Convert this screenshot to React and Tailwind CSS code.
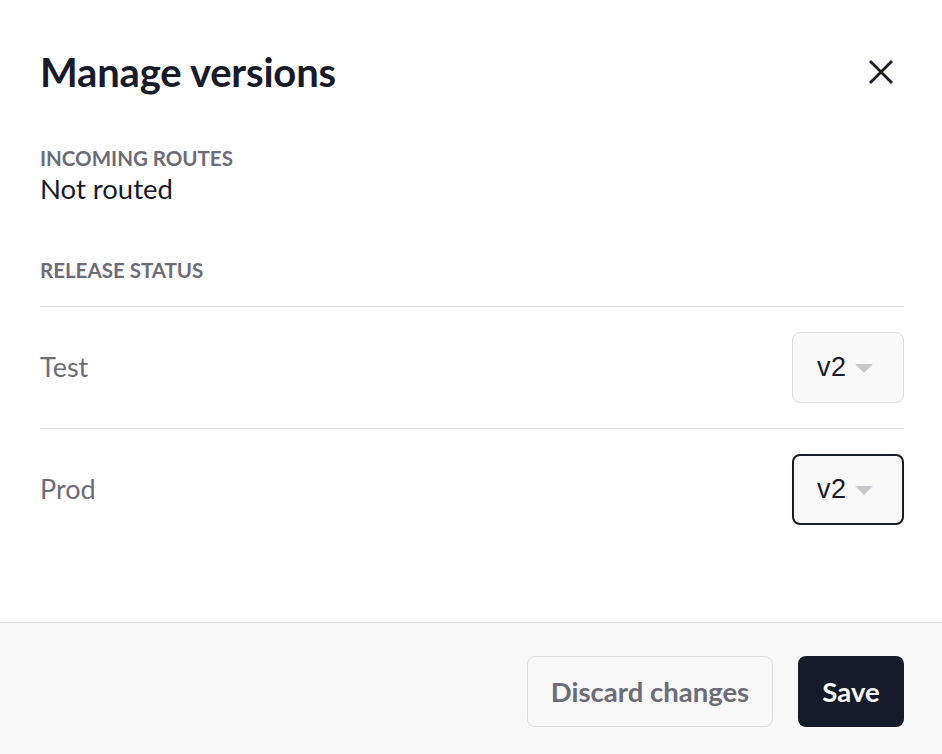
import React from "react";

function Caret() {
  return (
    <svg width="18" height="9" viewBox="0 0 18 9" className="ml-[8px] mt-[2px]">
      <path d="M0 0 L18 0 L9 9 Z" fill="#c6c6cd" />
    </svg>
  );
}

function VersionSelect({ focused }) {
  return (
    <div
      className={
        focused
          ? "flex items-center w-[112px] h-[71px] pl-[23px] rounded-[8px] border-2 border-[#171b2a] bg-[#f8f8f9]"
          : "flex items-center w-[112px] h-[71px] pl-[24px] rounded-[8px] border border-[#dcdce1] bg-[#f8f8f9]"
      }
    >
      <span
        className="text-[27px] tracking-[0.5px] text-[#171b2a]"
        style={{ fontFamily: "'Liberation Sans', Arial, sans-serif" }}
      >
        v2
      </span>
      <Caret />
    </div>
  );
}

function Row({ label, focused }) {
  return (
    <div className="flex items-center justify-between border-t border-[#e0e0e4] h-[122px]">
      <span className="text-[27px] text-[#6c6c78]">{label}</span>
      <VersionSelect focused={focused} />
    </div>
  );
}

export default function App() {
  return (
    <div
      className="w-[942px] h-[754px] bg-white flex flex-col"
      style={{ fontFamily: "Lato, 'Noto Sans', sans-serif" }}
    >
      <div className="flex-1 pl-10 pr-[38px] pt-[40px]">
        <div className="flex items-center justify-between h-[64px]">
          <h1 className="text-[40px] font-bold text-[#171b2a] tracking-[-0.2px]">Manage versions</h1>
          <svg width="26" height="26" viewBox="0 0 26 26" className="mr-[10px]">
            <path d="M3 3 L23 23 M23 3 L3 23" stroke="#171b2a" strokeWidth="2.8" strokeLinecap="square" />
          </svg>
        </div>
        <div className="mt-[42px] text-[20.5px] leading-[24px] font-bold text-[#6c6c78] uppercase">
          Incoming routes
        </div>
        <div className="text-[27.5px] leading-[38px] text-[#171b2a]">Not routed</div>
        <div className="mt-[50px] text-[20.5px] leading-[24px] font-bold text-[#6c6c78] uppercase">
          Release status
        </div>
        <div className="mt-[24px]">
          <Row label="Test" />
          <Row label="Prod" focused />
        </div>
      </div>
      <div className="h-[132px] border-t border-[#dcdce1] bg-[#f8f8f8] flex justify-end items-start gap-[25px] pt-[33px] pr-[38px]">
        <button className="w-[246px] h-[71px] rounded-[8px] border border-[#dcdce1] bg-[#f8f8f9] text-[27.5px] font-bold text-[#6c6c78]">
          Discard changes
        </button>
        <button className="w-[106px] h-[71px] rounded-[8px] bg-[#161b2b] text-[27.5px] font-bold text-white">
          Save
        </button>
      </div>
    </div>
  );
}
